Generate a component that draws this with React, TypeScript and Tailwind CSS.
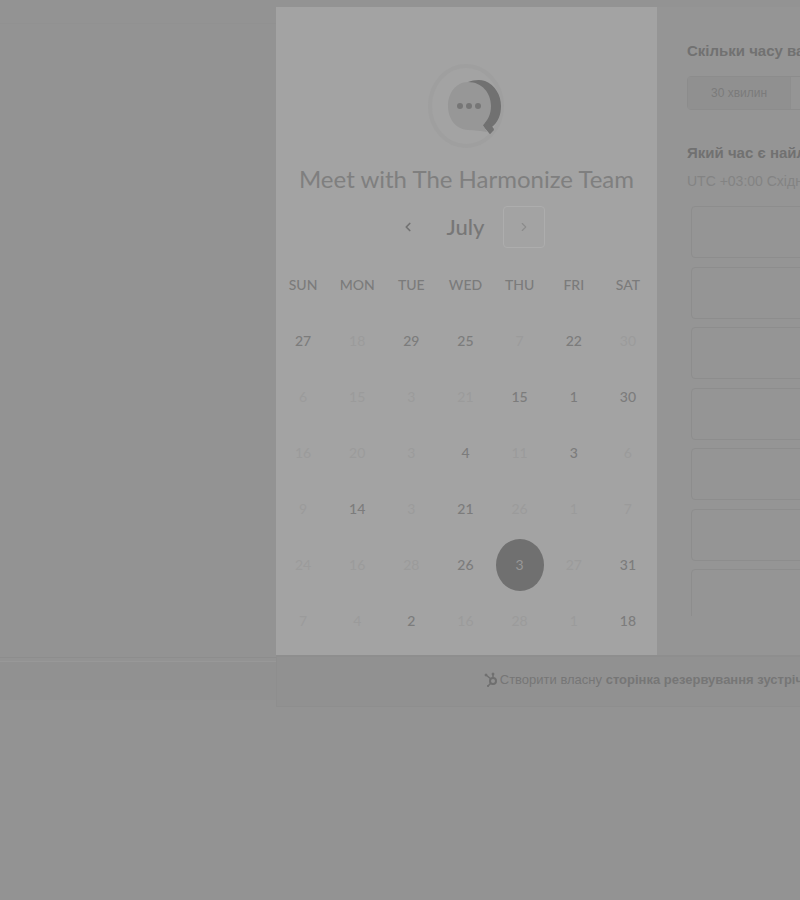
import { ChevronLeft, ChevronRight } from "lucide-react";

const weekDays = ["SUN", "MON", "TUE", "WED", "THU", "FRI", "SAT"];

type Day = { label: string; state: "open" | "closed" | "selected" };

const o = (label: string): Day => ({ label, state: "open" });
const c = (label: string): Day => ({ label, state: "closed" });

const weeks: Day[][] = [
  [o("27"), c("18"), o("29"), o("25"), c("7"), o("22"), c("30")],
  [c("6"), c("15"), c("3"), c("21"), o("15"), o("1"), o("30")],
  [c("16"), c("20"), c("3"), o("4"), c("11"), o("3"), c("6")],
  [c("9"), o("14"), c("3"), o("21"), c("26"), c("1"), c("7")],
  [c("24"), c("16"), c("28"), o("26"), { label: "3", state: "selected" }, c("27"), o("31")],
  [c("7"), c("4"), o("2"), c("16"), c("28"), c("1"), o("18")],
];

const dayStyles = {
  open: "text-[#7c7c7c] font-medium",
  closed: "text-[#9b9b9b]",
  selected: "bg-[#707070] text-[#979797]",
};

function Logo() {
  return (
    <svg viewBox="0 0 80 86" className="h-[86px] w-20" role="img" aria-label="Harmonize">
      <ellipse cx="39" cy="43" rx="36" ry="40" fill="none" stroke="#9f9f9f" strokeWidth="4" />
      <path
        d="M41 19C46 17 53 16 58 18C68 22 74 32 74 43C74 52 71 59 65 64L67 67L63 71L56 63L60 55Z"
        fill="#717171"
      />
      <path
        d="M41 19C55 19 64 30 64 43C64 51 61 57 56 62L60 69C54 68 48 67 41 67C28 66 21 55 21 43C21 30 29 19 41 19Z"
        fill="#979797"
      />
      <path d="M56 62L61 59L67 66L63 71Z" fill="#717171" />
      <circle cx="33" cy="43" r="3" fill="#767676" />
      <circle cx="42" cy="43" r="3" fill="#767676" />
      <circle cx="51" cy="43" r="3" fill="#767676" />
    </svg>
  );
}

function Sprocket() {
  return (
    <svg viewBox="0 0 14 16" className="h-4 w-3.5" fill="none" stroke="#6f6f6f" aria-hidden="true">
      <circle cx="9" cy="9" r="3" strokeWidth="2" />
      <path d="M9 6V2M7 7L2 3M7 11L4 14" strokeWidth="1.5" />
      <circle cx="2" cy="3" r="1" fill="#6f6f6f" />
      <circle cx="9" cy="2" r="1" fill="#6f6f6f" />
      <circle cx="4" cy="14" r="0.6" fill="#6f6f6f" />
    </svg>
  );
}

function Calendar() {
  return (
    <section className="flex w-1/2 flex-col items-center bg-[#a3a3a3] pt-14 font-[Lato,sans-serif]">
      <Logo />
      <h1 className="mt-2.5 text-2xl leading-10 whitespace-nowrap text-[#7f7f7f]">
        Meet with The Harmonize Team
      </h1>
      <div className="mt-1 flex h-12 w-full items-center justify-center">
        <button type="button" aria-label="Previous month" className="flex size-10 items-center justify-center text-[#727272]">
          <ChevronLeft size={14} strokeWidth={3} />
        </button>
        <h2 className="w-[75px] text-center text-[22px] leading-8 font-medium text-[#777777]">July</h2>
        <button
          type="button"
          aria-label="Next month"
          className="flex h-[42px] w-[42px] items-center justify-center rounded-sm border border-[#adadad] text-[#8c8c8c]"
        >
          <ChevronRight size={14} strokeWidth={2} />
        </button>
      </div>
      <div className="mt-1.5 w-full pr-0.5">
        <table className="w-full table-fixed text-center text-sm">
          <thead>
            <tr className="h-14">
              {weekDays.map((day) => (
                <th key={day} scope="col" className="p-0 font-medium text-[#7b7b7b]">
                  {day}
                </th>
              ))}
            </tr>
          </thead>
          <tbody>
            {weeks.map((week, row) => (
              <tr key={row} className="h-14">
                {week.map((day, column) => (
                  <td key={column} className="p-0">
                    <button
                      type="button"
                      disabled={day.state === "closed"}
                      className={`h-[52px] w-12 rounded-[50%] align-middle ${dayStyles[day.state]}`}
                    >
                      {day.label}
                    </button>
                  </td>
                ))}
              </tr>
            ))}
          </tbody>
        </table>
      </div>
    </section>
  );
}

function TimePicker() {
  return (
    <section className="w-1/2 bg-[#959595] px-[30px] pt-8 whitespace-nowrap">
      <h2 className="text-[15px] leading-6 font-bold text-[#717171]">Скільки часу вам потрібно?</h2>
      <div className="mt-[13px] flex h-[34px] rounded-sm border border-[#8c8c8c] text-xs">
        <button type="button" className="w-[103px] border-r border-[#8e8e8e] bg-[#909090] text-[#7b7b7b]">
          30 хвилин
        </button>
        <button type="button" className="flex-1" aria-label="60" />
      </div>
      <h2 className="mt-[31px] text-[15px] leading-6 font-bold text-[#717171]">Який час є найлегшим?</h2>
      <p className="mt-1 text-sm leading-6 text-[#838383]">UTC +03:00 Східна Європа</p>
      <div className="mt-[13px] h-[410px] overflow-hidden pl-1">
        <div className="flex h-[415px] flex-col justify-between">
          {Array.from({ length: 7 }, (_, slot) => (
            <button
              key={slot}
              type="button"
              aria-label={`Slot ${slot + 1}`}
              className="h-[52px] shrink-0 rounded-sm border border-[#8d8d8d]"
            />
          ))}
        </div>
      </div>
    </section>
  );
}

export default function App() {
  return (
    <main className="flex min-h-screen items-start overflow-hidden bg-[#939393] font-['Liberation_Sans',Arial,sans-serif]">
      <aside className="w-[276px] shrink-0">
        <div className="h-6 border-b border-[#919191]" />
        <div className="h-[634px] border-b border-[#8d8d8d]" />
        <div className="h-1 border-b border-[#989898]" />
        <div className="h-[38px] bg-[#919191]" />
      </aside>
      <div className="w-[762px] shrink-0 pt-[7px]">
        <div className="flex min-h-[648px]">
          <Calendar />
          <TimePicker />
        </div>
        <footer className="flex h-[52px] items-center justify-center gap-0.5 border border-t-2 border-[#8e8e8e] bg-[#919191] pr-3 pb-1 text-[13px] whitespace-nowrap text-[#767676]">
          <Sprocket />
          <p>
            Створити власну{" "}
            <a href="#booking" className="font-bold">
              сторінка резервування зустрічей
            </a>
          </p>
        </footer>
      </div>
    </main>
  );
}
